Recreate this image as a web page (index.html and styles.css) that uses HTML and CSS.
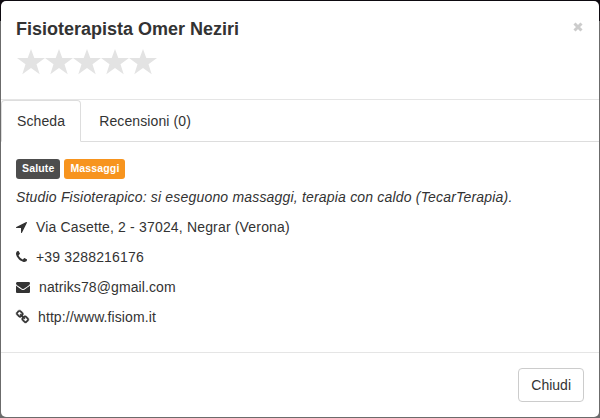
FILE: index.html
```html
<!DOCTYPE html>
<html lang="it">
<head>
<meta charset="utf-8">
<title>Fisioterapista Omer Neziri</title>
<link rel="stylesheet" href="styles.css">
</head>
<body>
<div class="modal">
  <header class="modal-header">
    <div class="heading">
      <h4 class="title">Fisioterapista Omer Neziri</h4>
      <svg class="close" viewBox="0 0 10 10" aria-label="Chiudi"><path d="M1.5 1.5 8.5 8.500M8.500 1.500 1.500 8.500"/></svg>
    </div>
    <div class="stars">
      <svg viewBox="0 0 28 26"><path d="M14 0 17.3 8.900H28L19.500 15.200 22.700 25.300 14 19.100 5.300 25.300 8.500 15.200 0 8.900H10.700Z"/></svg>
      <svg viewBox="0 0 28 26"><path d="M14 0 17.3 8.900H28L19.500 15.200 22.700 25.300 14 19.100 5.300 25.300 8.500 15.200 0 8.900H10.700Z"/></svg>
      <svg viewBox="0 0 28 26"><path d="M14 0 17.3 8.900H28L19.500 15.200 22.700 25.300 14 19.100 5.300 25.300 8.500 15.200 0 8.900H10.700Z"/></svg>
      <svg viewBox="0 0 28 26"><path d="M14 0 17.3 8.900H28L19.500 15.200 22.700 25.300 14 19.100 5.300 25.300 8.500 15.200 0 8.900H10.700Z"/></svg>
      <svg viewBox="0 0 28 26"><path d="M14 0 17.3 8.900H28L19.500 15.200 22.700 25.300 14 19.100 5.300 25.300 8.500 15.200 0 8.900H10.700Z"/></svg>
    </div>
  </header>
  <nav class="tabs">
    <a class="tab active">Scheda</a>
    <a class="tab">Recensioni (0)</a>
  </nav>
  <main class="content">
    <div class="labels"><span class="label dark">Salute</span><span class="label orange">Massaggi</span></div>
    <p class="row"><em class="description">Studio Fisioterapico: si eseguono massaggi, terapia con caldo (TecarTerapia).</em></p>
    <p class="row"><svg class="icon narrow" viewBox="0 0 1408 1792"><path d="M1401 349l-640 1280q-17 35-57 35-5 0-15-2-22-5-35.500-22.500t-13.500-39.500v-576h-576q-22 0-39.500-13.500t-22.500-35.500 4-42 29-30l1280-640q13-7 29-7 27 0 45 19 15 14 18.500 34.500t-6.500 39.500z"/></svg><span class="spaced">Via Casette, 2 - 37024, Negrar (Verona)</span></p>
    <p class="row"><svg class="icon narrow" viewBox="192 0 1408 1792"><path d="M1600 1240q0 27-10 70.500t-21 68.500q-21 50-122 106-94 51-186 51-27 0-52.500-3.500t-57.500-12.500-47.500-14.500-55.500-20.500-49-18q-98-35-175-83-128-79-264.500-215.500t-215.500-264.500q-48-77-83-175-3-9-18-49t-20.500-55.500-14.500-47.500-12.500-57.500-3.500-52.500q0-92 51-186 56-101 106-122 25-11 68.500-21t70.500-10q14 0 21 3 18 6 53 76 11 19 30 54t35 63.500 31 53.500q3 4 17.500 25t21.500 35.500 7 28.500q0 20-28.500 50t-62 55-62 53-28.500 46q0 9 5 22.500t8.500 20.500 14 24 11.500 19q76 137 174 235t235 174q2 1 19 11.500t24 14 20.500 8.500 22.500 5q18 0 46-28.500t53-62 55-62 50-28.500q14 0 28.500 7t35.500 21.500 25 17.500q25 15 53.500 31t63.500 35 54 30q70 35 76 53 3 7 3 21z"/></svg><span class="spaced">+39 3288216176</span></p>
    <p class="row"><svg class="icon wide" viewBox="0 0 1792 1792"><path d="M1792 710v794q0 66-47 113t-113 47h-1472q-66 0-113-47t-47-113v-794q44 49 101 87 362 246 497 345 57 42 92.500 65.500t94.500 48 110 24.500h2q51 0 110-24.500t94.500-48 92.500-65.500q170-123 498-345 57-39 100-87zm0-294q0 79-49 151t-122 123q-376 261-468 325-10 7-42.500 31t-54 38.500-52 32.500-57.500 27-50 9h-2q-23 0-50-9t-57.500-27-52-32.500-54-38.500-42.500-31q-91-64-262-182.500t-205-142.500q-62-42-117-115.500t-55-136.500q0-78 41.500-130t118.500-52h1472q65 0 112.500 47t47.500 113z"/></svg><span>natriks78@gmail.com</span></p>
    <p class="row"><svg class="icon medium" viewBox="64 0 1664 1792"><path d="M1520 1216q0-40-28-68l-208-208q-28-28-68-28-42 0-72 32 3 3 19 18.500t21.500 21.500 15 19 13 25.500 3.500 27.500q0 40-28 68t-68 28q-15 0-27.500-3.500t-25.500-13-19-15-21.500-21.500-18.500-19q-33 31-33 73 0 40 28 68l206 207q27 27 68 27 40 0 68-26l147-146q28-28 28-67zm-703-705q0-40-28-68l-206-207q-28-28-68-28-39 0-68 27l-147 146q-28 28-28 67 0 40 28 68l208 208q27 27 68 27 42 0 72-31-3-3-19-18.500t-21.500-21.500-15-19-13-25.500-3.500-27.500q0-40 28-68t68-28q15 0 27.500 3.500t25.500 13 19 15 21.500 21.500 18.500 19q33-31 33-73zm895 705q0 120-85 203l-147 146q-83 83-203 83-121 0-204-85l-206-207q-83-83-83-203 0-123 88-209l-88-88q-86 88-208 88-120 0-204-84l-208-208q-84-84-84-204t85-203l147-146q83-83 203-83 121 0 204 85l206 207q83 83 83 203 0 123-88 209l88 88q86-88 208-88 120 0 204 84l208 208q84 84 84 204z"/></svg><span>http://www.fisiom.it</span></p>
  </main>
  <footer class="modal-footer"><button class="button">Chiudi</button></footer>
</div>
</body>
</html>
```
FILE: styles.css
```css
* { box-sizing: border-box; }
body {
  margin: 0;
  height: 418px;
  padding: 1px;
  overflow: hidden;
  background: linear-gradient(#0d0a10 0 21px, #6b6b6b 21px);
  color: #333;
  font: 14px/20px "Liberation Sans", Arial, sans-serif;
}
.modal {
  display: flex;
  flex-direction: column;
  height: 416px;
  background: #fff;
  border-radius: 5px;
  overflow: hidden;
}
.modal-header {
  height: 99px;
  padding: 15px;
  border-bottom: 1px solid #e5e5e5;
}
.heading { display: flex; justify-content: space-between; }
.title { margin: 0; font-size: 18px; line-height: 26px; }
.close { width: 10px; height: 10px; margin: 6px 1px 0 0; }
.close path { fill: none; stroke: #ccc; stroke-width: 3; }
.stars { display: flex; margin: 7px 0 0 1px; }
.stars svg { width: 28px; height: 26px; fill: #e3e3e3; }
.tabs {
  display: flex;
  gap: 2px;
  height: 42px;
  border-bottom: 1px solid #ddd;
  letter-spacing: 0.11px;
}
.tab {
  height: 42px;
  padding: 10px 15px;
  border: 1px solid transparent;
  border-radius: 4px 4px 0 0;
}
.tab.active { background: #fff; border-color: #ddd #ddd #fff; }
.content { flex: 1; padding: 17px 15px 0; }
.labels { display: flex; gap: 4px; height: 20px; margin-bottom: 8px; }
.label {
  padding: 0 6px;
  border-radius: 3px;
  color: #fff;
  font-size: 10.5px;
  font-weight: bold;
  line-height: 19px;
  letter-spacing: 0.15px;
}
.dark { background: #4d4d4d; }
.orange { background: #f7941e; }
.row {
  display: flex;
  align-items: center;
  gap: 9px;
  margin: 0 0 10px;
  letter-spacing: 0.1px;
}
.description { letter-spacing: 0.185px; }
.spaced { letter-spacing: 0.17px; }
.icon { height: 14px; fill: #333; }
.narrow { width: 11px; }
.medium { width: 13px; stroke: #333; stroke-width: 60px; overflow: visible; }
.wide { width: 14px; }
.modal-footer {
  display: flex;
  justify-content: flex-end;
  height: 65px;
  padding: 15px;
  border-top: 1px solid #e5e5e5;
}
.button {
  height: 34px;
  padding: 6px 12px;
  background: #fff;
  border: 1px solid #ccc;
  border-radius: 4px;
  color: #333;
  font: inherit;
}
```
